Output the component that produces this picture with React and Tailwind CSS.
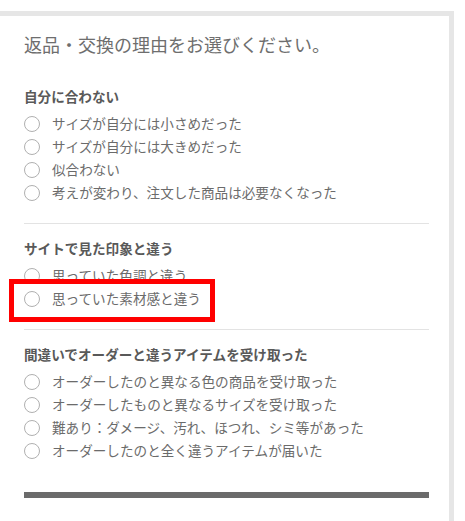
const sections = [
  {
    title: "自分に合わない",
    options: [
      "サイズが自分には小さめだった",
      "サイズが自分には大きめだった",
      "似合わない",
      "考えが変わり、注文した商品は必要なくなった",
    ],
  },
  {
    title: "サイトで見た印象と違う",
    options: ["思っていた色調と違う", "思っていた素材感と違う"],
    marked: 1,
  },
  {
    title: "間違いでオーダーと違うアイテムを受け取った",
    options: [
      "オーダーしたのと異なる色の商品を受け取った",
      "オーダーしたものと異なるサイズを受け取った",
      "難あり：ダメージ、汚れ、ほつれ、シミ等があった",
      "オーダーしたのと全く違うアイテムが届いた",
    ],
  },
];

function Radio({ label, marked }) {
  return (
    <label className="relative flex items-center h-[23px] gap-[12px] cursor-pointer">
      <span className="w-[16px] h-[16px] rounded-full border border-[#b0b0b0] bg-white shrink-0" />
      <span className="text-[13.6px] leading-[23px] text-[#6b6b6b] whitespace-nowrap">{label}</span>
      {marked && (
        <span className="absolute left-[-15px] top-[-8px] w-[206px] h-[43px] border-[5px] border-[#ff0000] pointer-events-none" />
      )}
    </label>
  );
}

export default function App() {
  return (
    <div
      className="bg-white min-h-[521px] pt-[11px]"
      style={{ fontFamily: '"Noto Sans CJK JP", "Noto Sans", sans-serif' }}
    >
      <div className="w-[454px] border-t-[5px] border-r-[5px] border-[#e6e6e6] pl-[24px] pr-[20px] pt-[14px] pb-[40px]">
        <h1 className="text-[18px] leading-[28px] text-[#6e6e6e] font-normal">
          返品・交換の理由をお選びください。
        </h1>

        <div className="mt-[28px]">
          {sections.map((s, i) => (
            <div
              key={s.title}
              className={
                i < sections.length - 1
                  ? "border-b border-[#e3e3e3] pb-[19px] mb-[14px]"
                  : ""
              }
            >
              <h2 className="text-[13.6px] leading-[20px] font-bold text-[#595959] mb-[6px]">
                {s.title}
              </h2>
              <div>
                {s.options.map((o, j) => (
                  <Radio key={o} label={o} marked={s.marked === j} />
                ))}
              </div>
            </div>
          ))}
        </div>

        <div className="mt-[30px] h-[6px] bg-[#6b6b6b]" />
      </div>
    </div>
  );
}
